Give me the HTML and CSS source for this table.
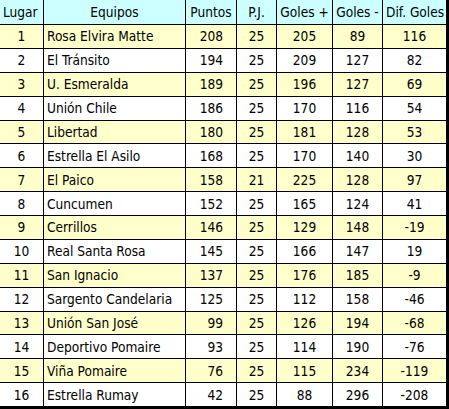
FILE: index.html
```html
<!DOCTYPE html>
<html lang="es">
<head>
<meta charset="utf-8">
<title>Tabla de posiciones</title>
<link rel="stylesheet" href="styles.css">
</head>
<body>
<table class="standings">
  <thead>
    <tr class="head">
      <th class="c-pos lft">Lugar</th>
      <th class="c-team">Equipos</th>
      <th class="c-pts">Puntos</th>
      <th class="c-pj">P.J.</th>
      <th class="c-gf">Goles +</th>
      <th class="c-gc">Goles -</th>
      <th class="c-dif">Dif. Goles</th>
    </tr>
  </thead>
  <tbody>
    <tr class="odd"><td class="ctr">1</td><td class="team">Rosa Elvira Matte</td><td class="pts">208</td><td class="ctr">25</td><td class="ctr">205</td><td class="ctr">89</td><td class="ctr last">116</td></tr>
    <tr><td class="ctr">2</td><td class="team">El Tránsito</td><td class="pts">194</td><td class="ctr">25</td><td class="ctr">209</td><td class="ctr">127</td><td class="ctr last">82</td></tr>
    <tr class="odd"><td class="ctr">3</td><td class="team">U. Esmeralda</td><td class="pts">189</td><td class="ctr">25</td><td class="ctr">196</td><td class="ctr">127</td><td class="ctr last">69</td></tr>
    <tr><td class="ctr">4</td><td class="team">Unión Chile</td><td class="pts">186</td><td class="ctr">25</td><td class="ctr">170</td><td class="ctr">116</td><td class="ctr last">54</td></tr>
    <tr class="odd"><td class="ctr">5</td><td class="team">Libertad</td><td class="pts">180</td><td class="ctr">25</td><td class="ctr">181</td><td class="ctr">128</td><td class="ctr last">53</td></tr>
    <tr><td class="ctr">6</td><td class="team">Estrella El Asilo</td><td class="pts">168</td><td class="ctr">25</td><td class="ctr">170</td><td class="ctr">140</td><td class="ctr last">30</td></tr>
    <tr class="odd"><td class="ctr">7</td><td class="team">El Paico</td><td class="pts">158</td><td class="ctr">21</td><td class="ctr">225</td><td class="ctr">128</td><td class="ctr last">97</td></tr>
    <tr><td class="ctr">8</td><td class="team">Cuncumen</td><td class="pts">152</td><td class="ctr">25</td><td class="ctr">165</td><td class="ctr">124</td><td class="ctr last">41</td></tr>
    <tr class="odd"><td class="ctr">9</td><td class="team">Cerrillos</td><td class="pts">146</td><td class="ctr">25</td><td class="ctr">129</td><td class="ctr">148</td><td class="ctr last">-19</td></tr>
    <tr><td class="ctr">10</td><td class="team">Real Santa Rosa</td><td class="pts">145</td><td class="ctr">25</td><td class="ctr">166</td><td class="ctr">147</td><td class="ctr last">19</td></tr>
    <tr class="odd"><td class="ctr">11</td><td class="team">San Ignacio</td><td class="pts">137</td><td class="ctr">25</td><td class="ctr">176</td><td class="ctr">185</td><td class="ctr last">-9</td></tr>
    <tr><td class="ctr">12</td><td class="team">Sargento Candelaria</td><td class="pts">125</td><td class="ctr">25</td><td class="ctr">112</td><td class="ctr">158</td><td class="ctr last">-46</td></tr>
    <tr class="odd"><td class="ctr">13</td><td class="team">Unión San José</td><td class="pts">99</td><td class="ctr">25</td><td class="ctr">126</td><td class="ctr">194</td><td class="ctr last">-68</td></tr>
    <tr><td class="ctr">14</td><td class="team">Deportivo Pomaire</td><td class="pts">93</td><td class="ctr">25</td><td class="ctr">114</td><td class="ctr">190</td><td class="ctr last">-76</td></tr>
    <tr class="odd"><td class="ctr">15</td><td class="team">Viña Pomaire</td><td class="pts">76</td><td class="ctr">25</td><td class="ctr">115</td><td class="ctr">234</td><td class="ctr last">-119</td></tr>
    <tr class="final"><td class="ctr">16</td><td class="team">Estrella Rumay</td><td class="pts">42</td><td class="ctr">25</td><td class="ctr">88</td><td class="ctr">296</td><td class="ctr last">-208</td></tr>
  </tbody>
</table>
</body>
</html>
```

FILE: styles.css
```css
html, body {
  margin: 0;
  padding: 0;
  background: #ffffff;
}

.standings {
  border-collapse: separate;
  border-spacing: 0;
  table-layout: fixed;
  width: 449px;
  font-family: "DejaVu Sans Condensed", "DejaVu Sans", sans-serif;
  font-stretch: condensed;
  font-size: 13.6px;
  color: #000;
}

.standings th,
.standings td {
  box-sizing: border-box;
  border-right: 1px solid #000;
  border-bottom: 1px solid #000;
  padding: 0 3px;
  height: 23.875px;
  line-height: 16px;
  white-space: nowrap;
  overflow: hidden;
  font-weight: normal;
}

.head th {
  background: #ccffff;
  height: 25px;
  text-align: center;
}

.head .lft { text-align: left; }

.c-pos { width: 44px; }
.c-team { width: 142px; }
.c-pts { width: 51px; }
.c-pj { width: 40px; }
.c-gf { width: 56px; }
.c-gc { width: 50px; }
.c-dif { width: 66px; border-right-width: 3px !important; }

.odd td { background: #ffffcc; }

.ctr { text-align: center; }
.team { text-align: left; }
.pts { text-align: right; padding-right: 13px !important; }

.standings td.last { border-right-width: 3px; }
.final td { border-bottom-width: 3px; height: 25.875px; }
```
